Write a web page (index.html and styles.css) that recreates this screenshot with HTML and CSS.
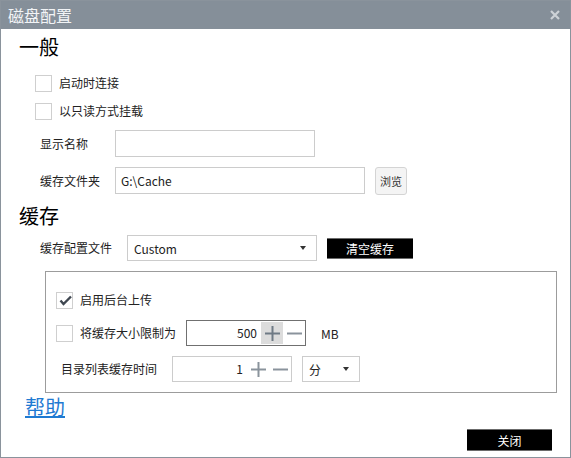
FILE: index.html
```html
<!DOCTYPE html>
<html lang="zh-CN">
<head>
    <meta charset="UTF-8">
    <title>磁盘配置</title>
    <link rel="stylesheet" href="styles.css">
</head>
<body>
    <div class="window">
        <div class="titlebar">
            <span class="title">磁盘配置</span>
            <svg class="close" width="10" height="10" viewBox="0 0 10 10">
                <path d="M1 1 L9 9 M9 1 L1 9" stroke="#cdd2d7" stroke-width="2.2"/>
            </svg>
        </div>

        <div class="content">
            <h2 class="section">一般</h2>

            <div class="check-row">
                <span class="checkbox"></span>
                <span class="check-label">启动时连接</span>
            </div>
            <div class="check-row">
                <span class="checkbox"></span>
                <span class="check-label">以只读方式挂载</span>
            </div>

            <div class="field-row first">
                <span class="field-label">显示名称</span>
                <div class="textbox name-box"></div>
            </div>
            <div class="field-row">
                <span class="field-label">缓存文件夹</span>
                <div class="textbox folder-box">G:\Cache</div>
                <button class="browse">浏览</button>
            </div>

            <h2 class="section cache-title">缓存</h2>

            <div class="profile-row">
                <span class="field-label wide">缓存配置文件</span>
                <div class="dropdown profile">
                    <span>Custom</span>
                    <span class="arrow"></span>
                </div>
                <button class="dark-btn clear">清空缓存</button>
            </div>

            <div class="group">
                <div class="group-row">
                    <span class="checkbox checked">
                        <svg width="17" height="17" viewBox="0 0 17 17">
                            <path d="M4.5 8.5 L7.5 12 L15 4.5" fill="none" stroke="#3f4751" stroke-width="2.4"/>
                        </svg>
                    </span>
                    <span class="check-label">启用后台上传</span>
                </div>

                <div class="group-row limit-row">
                    <span class="checkbox"></span>
                    <span class="check-label limit-label">将缓存大小限制为</span>
                    <div class="numeric strong">
                        <span class="num-value">500</span>
                        <span class="num-btn hover">
                            <svg width="15" height="15" viewBox="0 0 15 15"><path d="M0 7.5 H15 M7.5 0 V15" stroke="#6f7a85" stroke-width="2"/></svg>
                        </span>
                        <span class="num-btn">
                            <svg width="15" height="15" viewBox="0 0 15 15"><path d="M0 7.5 H15" stroke="#8a939c" stroke-width="2"/></svg>
                        </span>
                    </div>
                    <span class="unit">MB</span>
                </div>

                <div class="group-row time-row">
                    <span class="field-label time-label">目录列表缓存时间</span>
                    <div class="numeric">
                        <span class="num-value">1</span>
                        <span class="num-btn">
                            <svg width="15" height="15" viewBox="0 0 15 15"><path d="M0 7.5 H15 M7.5 0 V15" stroke="#8a939c" stroke-width="2"/></svg>
                        </span>
                        <span class="num-btn">
                            <svg width="15" height="15" viewBox="0 0 15 15"><path d="M0 7.5 H15" stroke="#8a939c" stroke-width="2"/></svg>
                        </span>
                    </div>
                    <div class="dropdown unit-select">
                        <span>分</span>
                        <span class="arrow"></span>
                    </div>
                </div>
            </div>

            <a class="help" href="#">帮助</a>

            <div class="footer">
                <button class="dark-btn close-btn">关闭</button>
            </div>
        </div>
    </div>
</body>
</html>
```

FILE: styles.css
```css
body {
    margin: 0;
    font-family: "Noto Sans CJK SC", "Noto Sans", sans-serif;
    font-size: 12px;
    color: #222;
    background: #fff;
}

.window {
    width: 571px;
    height: 458px;
    box-sizing: border-box;
    border: 1px solid #8a939c;
    background: #fff;
}

.titlebar {
    height: 28px;
    background-color: #858f99;
    display: flex;
    align-items: center;
    justify-content: space-between;
    padding: 0 10px 0 7px;
}

.title {
    color: #f2f4f6;
    font-size: 16px;
    line-height: 20px;
}

.content {
    padding: 6px 0 0 18px;
}

.section {
    margin: 0;
    font-size: 20px;
    font-weight: normal;
    line-height: 24px;
    color: #000;
}

.check-row {
    display: flex;
    align-items: center;
    height: 28px;
    margin-left: 16px;
}

.section + .check-row {
    margin-top: 10px;
}

.checkbox {
    width: 17px;
    height: 17px;
    box-sizing: border-box;
    border: 1px solid #cfcfcf;
    background: #fff;
    flex: none;
    position: relative;
}

.checkbox svg {
    position: absolute;
    left: -1px;
    top: -1px;
}

.check-label {
    margin-left: 7px;
    line-height: 16px;
}

.field-row {
    display: flex;
    align-items: center;
    height: 27px;
    margin-top: 10px;
    margin-left: 21px;
}

.field-row.first {
    margin-top: 5px;
}

.field-label {
    width: 75px;
    flex: none;
    line-height: 16px;
}

.field-label.wide {
    width: 87px;
}

.textbox {
    height: 27px;
    box-sizing: border-box;
    border: 1px solid #cccccc;
    padding-left: 5px;
    line-height: 25px;
}

.name-box {
    width: 200px;
}

.folder-box {
    width: 250px;
}

.browse {
    margin-left: 10px;
    width: 32px;
    height: 28px;
    padding: 0;
    border: 1px solid #d4d4d4;
    border-radius: 3px;
    background: #f4f4f4;
    font-family: inherit;
    font-size: 11px;
    color: #333;
}

.cache-title {
    margin-top: 10px;
}

.profile-row {
    display: flex;
    align-items: center;
    height: 26px;
    margin-top: 7px;
    margin-left: 21px;
}

.dropdown {
    height: 26px;
    box-sizing: border-box;
    border: 1px solid #cccccc;
    display: flex;
    align-items: center;
    justify-content: space-between;
    padding: 0 10px 0 6px;
}

.dropdown.profile {
    width: 190px;
}

.arrow {
    width: 0;
    height: 0;
    border-left: 3px solid transparent;
    border-right: 3px solid transparent;
    border-top: 4px solid #333;
}

.dark-btn {
    background: #000;
    color: #fff;
    border: none;
    border-top: 1px solid #6b6b6b;
    border-bottom: 1px solid #6b6b6b;
    font-family: inherit;
    font-size: 12px;
    padding: 0;
}

.clear {
    margin-left: 10px;
    width: 86px;
    height: 21px;
}

.group {
    margin: 10px 0 0 26px;
    width: 512px;
    height: 122px;
    box-sizing: border-box;
    border: 1px solid #9c9c9c;
    padding: 15px 0 0 10px;
}

.group-row {
    display: flex;
    align-items: center;
    height: 26px;
}

.limit-row {
    margin-top: 7px;
}

.time-row {
    margin-top: 10px;
}

.limit-label {
    width: 106px;
    flex: none;
}

.time-label {
    margin-left: 5px;
    width: 111px;
}

.numeric {
    width: 120px;
    height: 26px;
    box-sizing: border-box;
    border: 1px solid #cccccc;
    display: flex;
}

.numeric.strong {
    border-color: #707070;
}

.num-value {
    flex: 1;
    text-align: right;
    padding-right: 4px;
    line-height: 24px;
}

.num-btn {
    width: 22px;
    margin: 1px 0;
    display: flex;
    align-items: center;
    justify-content: center;
}

.num-btn.hover {
    background: #dcdcdc;
}

.unit {
    margin-left: 15px;
}

.unit-select {
    margin-left: 10px;
    width: 58px;
}

.help {
    display: inline-block;
    margin: 2px 0 0 6px;
    font-size: 20px;
    line-height: 24px;
    color: #1f7ad2;
    text-decoration: underline;
}

.footer {
    display: flex;
    justify-content: flex-end;
    margin: 10px 18px 0 0;
}

.close-btn {
    width: 85px;
    height: 22px;
}
```
